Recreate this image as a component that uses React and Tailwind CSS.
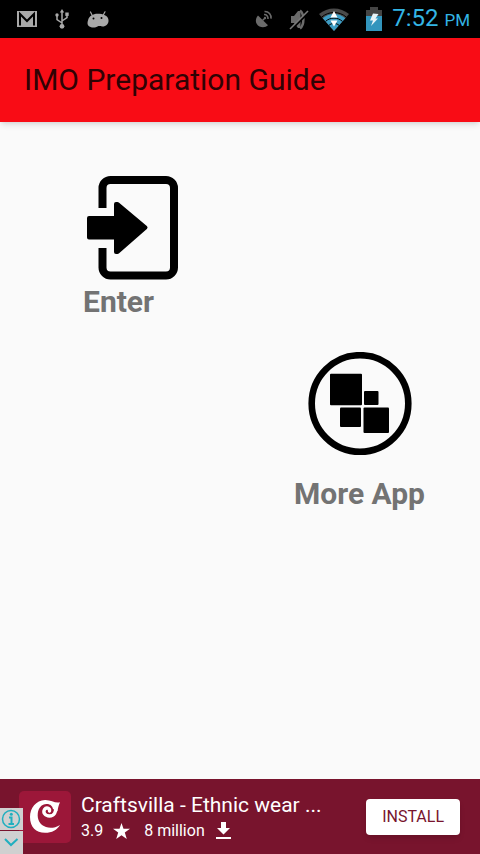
import React from 'react';

const GmailIcon = () => (
    <svg width="20" height="16" viewBox="0 0 20 16" aria-hidden="true">
        <rect width="20" height="16" fill="#a9a9a9" />
        <path d="M3 14.5V3L10 10L17 3V14.5" fill="none" stroke="#000" strokeWidth="2" />
    </svg>
);

const UsbIcon = () => (
    <svg width="14" height="20" viewBox="0 0 14 20" fill="none" stroke="#a9a9a9" strokeWidth="1.5" aria-hidden="true">
        <path d="M7 2V17M7 14L2 10.5V6M7 12L12 8.500V5" />
        <path d="M7 0L9.200 3.500H4.800Z" fill="#a9a9a9" stroke="none" />
        <circle cx="7" cy="17.300" r="2.400" fill="#a9a9a9" stroke="none" />
        <circle cx="2" cy="6" r="1.700" fill="#a9a9a9" stroke="none" />
        <rect x="10.300" y="3.500" width="3.400" height="3.400" fill="#a9a9a9" stroke="none" />
    </svg>
);

const DroidIcon = () => (
    <svg width="22" height="17" viewBox="0 0 22 17" aria-hidden="true">
        <path d="M3.500 1L5.500 5M18 0.800L16 4.500" stroke="#a9a9a9" strokeWidth="1.200" strokeLinecap="round" />
        <path d="M1 9.500C2 5 6 2.800 10.500 2.800C16 2.800 21 4.500 21.500 9C21.800 13 19 15.500 15.500 15.500C13 15.500 12.500 14.800 11 15.200C9 16.500 6 17 3.500 16C0.500 15 0 12.500 1 9.500Z" fill="#a9a9a9" />
        <circle cx="6.500" cy="7.500" r="1" fill="#000" />
        <circle cx="14.500" cy="7" r="1" fill="#000" />
    </svg>
);

const GpsIcon = () => (
    <svg width="18" height="18" viewBox="0 0 18 18" fill="none" stroke="#6b6b6b" aria-hidden="true">
        <path d="M3 5.500C-0.500 9.500 0.500 14.500 4.500 16.500C7.500 18 11 17.300 13 15.300Z" fill="#6b6b6b" stroke="none" />
        <path d="M7.500 10.500L10 8" strokeWidth="1.500" />
        <circle cx="10" cy="8" r="1.200" fill="#6b6b6b" stroke="none" />
        <path d="M9 4.500C11.500 4.300 13.300 6.300 13 9M9.500 1.500C13.800 1.300 16.500 4.500 16 8.700" strokeWidth="1.600" />
    </svg>
);

const MuteIcon = () => (
    <svg width="20" height="21" viewBox="0 0 20 21" fill="none" aria-hidden="true">
        <path d="M2 7H5L9 2H11.500V19H9L5 14H2Z" fill="#6b6b6b" />
        <path d="M11 1.500C15.500 5 15.500 16 11 19.500" stroke="#6b6b6b" strokeWidth="2.500" />
        <path d="M2.500 20.500L19.500 3.500" stroke="#000" strokeWidth="2" />
        <path d="M1 20L19 2" stroke="#7a7a7a" strokeWidth="1.600" />
    </svg>
);

const WifiIcon = () => (
    <svg width="30" height="23" viewBox="0 0 30 23" aria-hidden="true">
        <path d="M0 6C8.500-1.500 21.500-1.500 30 6L15 23Z" fill="#4a4a4a" />
        <path d="M3.700 10.200C10 4.500 20 4.500 26.300 10.200L15 23Z" fill="#3d9cc4" />
        <path d="M2.800 9C10 3 20 3 27.200 9M6.500 13.400C11.500 9 18.500 9 23.500 13.400M10 17.300C13 14.800 17 14.800 20 17.300" fill="none" stroke="#000" strokeWidth="1" />
        <path d="M15 3L18.500 9.500H11.500ZM15 18.500L11.500 12.500H18.500Z" fill="#fff" />
    </svg>
);

const BatteryIcon = () => (
    <svg width="16" height="24" viewBox="0 0 16 24" aria-hidden="true">
        <path d="M4 0H12V3H16V24H0V3H4Z" fill="#454545" />
        <path d="M0 9H16V24H0Z" fill="#3295bd" />
        <path d="M7 6.500L12.500 7L9.500 11.500H12L5 19L7 13.500H4Z" fill="#e9f4f8" />
    </svg>
);

const StatusBar = () => (
    <div className="flex h-[38px] shrink-0 items-center justify-between bg-black pl-[17px] pr-[10px]">
        <div className="flex items-center gap-[18px]">
            <GmailIcon />
            <UsbIcon />
            <DroidIcon />
        </div>
        <div className="flex items-center gap-[10px]">
            <div className="flex items-center gap-4">
                <GpsIcon />
                <MuteIcon />
            </div>
            <div className="flex items-center gap-[17px]">
                <WifiIcon />
                <BatteryIcon />
            </div>
            <p className="text-2xl leading-8 text-[#33b5e5]">
                7:52 <span className="text-[17px]">PM</span>
            </p>
        </div>
    </div>
);

const EnterIcon = () => (
    <svg width="92" height="104" viewBox="0 0 92 104" aria-hidden="true">
        <path d="M16.500 32V12A8 8 0 0 1 24.500 4H80A8 8 0 0 1 88 12V91.500A8 8 0 0 1 80 99.500H24.500A8 8 0 0 1 16.500 91.500V72" fill="none" stroke="#000" strokeWidth="8" />
        <path d="M3 42H30V28H31.500L59.500 51.500L31.500 76H30V61.500H3Z" fill="#000" stroke="#000" strokeWidth="4" strokeLinejoin="round" />
    </svg>
);

const MoreAppIcon = () => (
    <svg width="104" height="104" viewBox="0 0 104 104" aria-hidden="true">
        <circle cx="52" cy="51.500" r="48.300" fill="none" stroke="#000" strokeWidth="6.600" />
        <rect x="22" y="21.700" width="32" height="31.500" rx="1" />
        <rect x="56" y="39" width="14.500" height="14" rx="1" />
        <rect x="32" y="55.500" width="21" height="19.500" rx="1" />
        <rect x="55.500" y="55.500" width="25.500" height="25.500" rx="1" />
    </svg>
);

const AdBanner = () => (
    <aside className="relative flex h-[75px] shrink-0 items-center justify-between bg-[#78142d] pl-[19px] pr-5 text-white">
        <div className="flex items-center gap-[10px]">
            <svg width="52" height="52" viewBox="0 0 52 52" aria-hidden="true">
                <rect width="52" height="52" rx="5" fill="#9c1739" />
                <path d="M41 11.300C36 12.500 32 8.800 26 9C17 9.300 11 17 11 26C11 36 17 41.800 26 41.800C33 41.800 38 39 41 34C36 37 31 37.500 27 36C21 34 18 28.500 18.800 22C19.500 17 22.500 13.200 27.500 13C31 12.800 33.500 15 34 18L38.500 20C39 17 39.500 14.500 41 11.300Z" fill="#fff" />
                <path d="M36.500 15.500C37.500 21 35 25 30.500 25C26 25 23.800 21.500 25.500 18.500C27.200 16 31 17 30.500 20" fill="none" stroke="#fff" strokeWidth="3.400" strokeLinecap="round" />
            </svg>
            <div>
                <p className="text-[21px] leading-7">Craftsvilla - Ethnic wear ...</p>
                <div className="flex items-center text-base leading-6">
                    <span>3.9</span>
                    <svg className="ml-[10px] mr-[14px]" width="17" height="16" viewBox="0 0 17 16" fill="#fff" aria-hidden="true">
                        <path d="M8.500 0L10.500 5.800H17L11.800 9.500L13.800 16L8.500 12.200L3.200 16L5.200 9.500L0 5.800H6.500Z" />
                    </svg>
                    <span>8 million</span>
                    <svg className="ml-[11px]" width="15" height="17" viewBox="0 0 15 17" fill="#fff" aria-hidden="true">
                        <path d="M5 0H10V6H14L7.500 12.500L1 6H5ZM0 15H15V17H0Z" />
                    </svg>
                </div>
            </div>
        </div>
        <button type="button" className="h-9 rounded-sm bg-white px-4 text-base text-[#78142d] shadow-md">
            INSTALL
        </button>

        {/* Ad choices controls */}
        <div className="absolute bottom-0 left-0 flex flex-col gap-px">
            <button type="button" aria-label="Ad information" className="bg-[#d0d0d0]">
                <svg className="block" width="23" height="22" viewBox="0 0 23 22" fill="none" stroke="#20afbf" aria-hidden="true">
                    <circle cx="11" cy="11" r="8.500" strokeWidth="1.500" />
                    <path d="M9 9.500H11.500V15.500M8.500 16H14" strokeWidth="2" />
                    <circle cx="11.300" cy="6.200" r="1.500" fill="#20afbf" stroke="none" />
                </svg>
            </button>
            <button type="button" aria-label="Close ad" className="bg-[#d0d0d0]">
                <svg className="block" width="23" height="23" viewBox="0 0 23 23" fill="none" stroke="#20afbf" strokeWidth="2" aria-hidden="true">
                    <path d="M5 8L11 14L17.500 8" />
                </svg>
            </button>
        </div>
    </aside>
);

const App = () => {
    return (
        <div className="flex min-h-screen flex-col bg-[#fafafa] font-[Roboto,sans-serif]">
            <StatusBar />
            <header className="z-10 flex h-[84px] shrink-0 items-center bg-[#f90c15] px-6 shadow-md">
                <h1 className="text-3xl text-[#300204]">IMO Preparation Guide</h1>
            </header>

            <main className="flex flex-1 flex-col px-[55px] pt-[54px]">
                <button type="button" className="ml-7 flex flex-col items-start gap-1 self-start text-3xl leading-9 font-bold text-[#737373]">
                    <span className="pl-[3px]"><EnterIcon /></span>
                    Enter
                </button>
                <button type="button" className="mt-8 flex flex-col items-center gap-5 self-end text-3xl leading-9 font-bold text-[#737373]">
                    <MoreAppIcon />
                    More App
                </button>
            </main>

            <AdBanner />
        </div>
    );
};

export default App;
